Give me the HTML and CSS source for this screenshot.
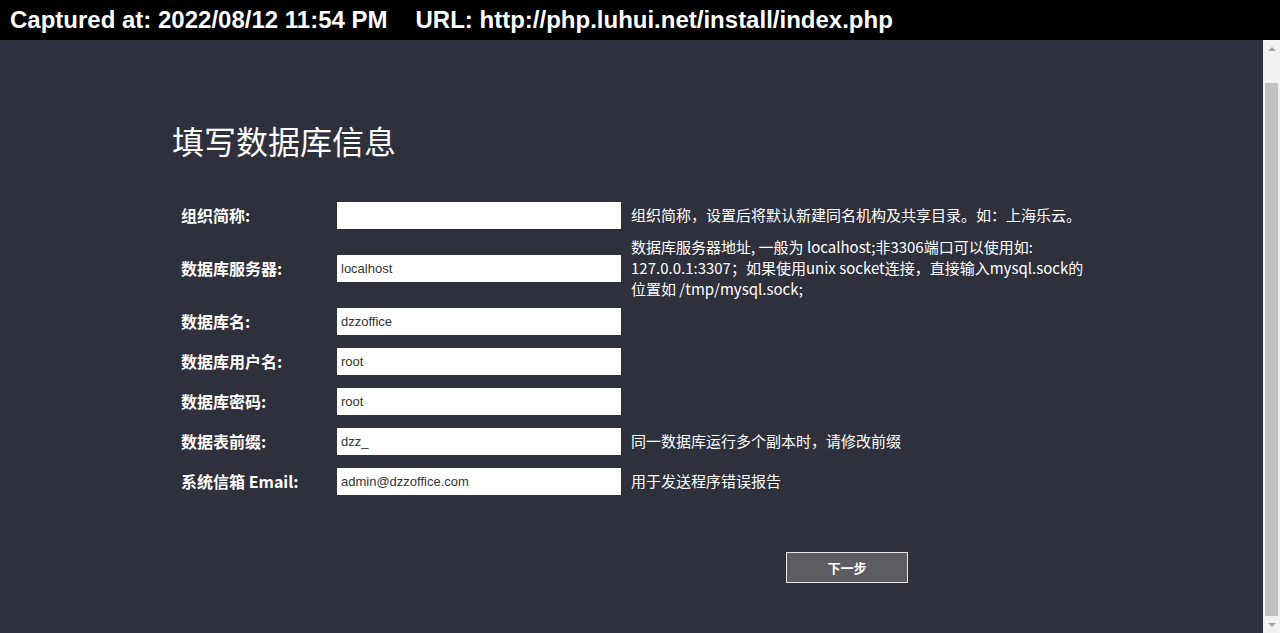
FILE: index.html
```html
<!DOCTYPE html>
<html lang="zh-CN">
<head>
    <meta charset="UTF-8">
    <title>填写数据库信息</title>
    <link rel="stylesheet" href="styles.css">
</head>
<body>
    <!-- 截图信息栏 -->
    <div class="capture-bar">
        <span>Captured at: 2022/08/12 11:54 PM</span>
        <span>URL: http://php.luhui.net/install/index.php</span>
    </div>

    <div class="viewport">
        <div class="page">
            <div class="container">
                <h1 class="title">填写数据库信息</h1>

                <!-- 数据库表单 -->
                <div class="form">
                    <label class="label">组织简称:</label>
                    <input class="field" type="text" value="">
                    <div class="desc">组织简称，设置后将默认新建同名机构及共享目录。如：上海乐云。</div>

                    <label class="label">数据库服务器:</label>
                    <input class="field" type="text" value="localhost">
                    <div class="desc">数据库服务器地址, 一般为 localhost;非3306端口可以使用如:<br>127.0.0.1:3307；如果使用unix socket连接，直接输入mysql.sock的<br>位置如 /tmp/mysql.sock;</div>

                    <label class="label">数据库名:</label>
                    <input class="field" type="text" value="dzzoffice">
                    <div class="desc"></div>

                    <label class="label">数据库用户名:</label>
                    <input class="field" type="text" value="root">
                    <div class="desc"></div>

                    <label class="label">数据库密码:</label>
                    <input class="field" type="text" value="root">
                    <div class="desc"></div>

                    <label class="label">数据表前缀:</label>
                    <input class="field" type="text" value="dzz_">
                    <div class="desc">同一数据库运行多个副本时，请修改前缀</div>

                    <label class="label">系统信箱 Email:</label>
                    <input class="field" type="text" value="admin@dzzoffice.com">
                    <div class="desc">用于发送程序错误报告</div>
                </div>

                <div class="actions">
                    <button class="btn-next">下一步</button>
                </div>
            </div>
        </div>

        <!-- 浏览器滚动条 -->
        <div class="scrollbar">
            <div class="arrow arrow-up"></div>
            <div class="track">
                <div class="thumb"></div>
            </div>
            <div class="arrow arrow-down"></div>
        </div>
    </div>
</body>
</html>
```

FILE: styles.css
```css
/* 安装页 - 数据库信息 */
html, body {
    margin: 0;
    height: 633px;
    overflow: hidden;
}

body {
    display: flex;
    flex-direction: column;
    font-family: "Noto Sans CJK SC", sans-serif;
}

.capture-bar {
    height: 40px;
    background-color: #000;
    color: #fff;
    font-family: "Liberation Sans", Arial, sans-serif;
    font-weight: bold;
    font-size: 24px;
    display: flex;
    align-items: center;
    gap: 28px;
    padding-left: 10px;
    white-space: nowrap;
    flex-shrink: 0;
}

.viewport {
    flex: 1;
    display: flex;
    min-height: 0;
}

.page {
    flex: 1;
    background-color: #2e303b;
    color: #fff;
}

.container {
    margin-left: 172px;
    padding-top: 81px;
}

.title {
    margin: 0 0 36px 0;
    font-size: 32px;
    font-weight: normal;
    line-height: 38px;
    color: #fff;
}

/* 表单：标签 / 输入框 / 说明 三列 */
.form {
    display: grid;
    grid-template-columns: 146px 284px 480px;
    grid-auto-rows: minmax(40px, auto);
    column-gap: 10px;
    align-items: center;
    padding-left: 9px;
}

.label {
    font-size: 16px;
    font-weight: bold;
    color: #fff;
}

.field {
    width: 284px;
    height: 27px;
    box-sizing: border-box;
    border: none;
    outline: none;
    margin: 0;
    padding: 0 4px;
    background-color: #fff;
    color: #333;
    font-family: "Liberation Sans", Arial, sans-serif;
    font-size: 13px;
}

.desc {
    font-size: 15px;
    line-height: 21px;
    padding: 1px 0 2px;
    color: #fff;
    white-space: nowrap;
}

.actions {
    margin-top: 51px;
    padding-left: 614px;
}

.btn-next {
    width: 122px;
    height: 31px;
    background-color: #5b5d63;
    border: 1px solid #e6e6e6;
    color: #fff;
    font-family: "Noto Sans CJK SC", sans-serif;
    font-size: 13px;
    font-weight: bold;
    cursor: pointer;
}

/* 模拟滚动条 */
.scrollbar {
    width: 17px;
    background-color: #f1f1f1;
    display: flex;
    flex-direction: column;
}

.arrow {
    height: 17px;
    display: flex;
    justify-content: center;
    align-items: center;
}

.arrow::before {
    content: "";
    border-left: 4px solid transparent;
    border-right: 4px solid transparent;
}

.arrow-up::before {
    border-bottom: 4px solid #a3a3a3;
}

.arrow-down::before {
    border-top: 4px solid #a3a3a3;
}

.track {
    flex: 1;
    padding: 26px 2px 0;
    display: flex;
}

.thumb {
    flex: 1;
    background-color: #c1c1c1;
}
```
